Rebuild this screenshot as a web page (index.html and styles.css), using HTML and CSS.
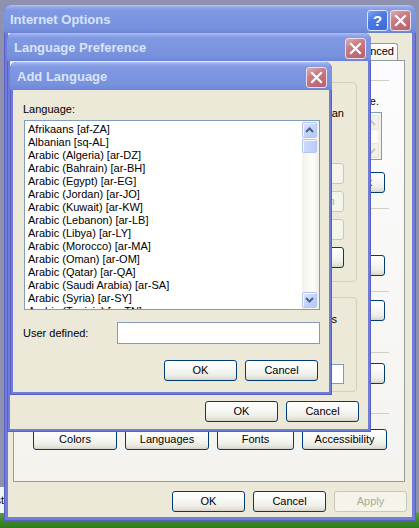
FILE: index.html
```html
<!DOCTYPE html>
<html>
<head>
<meta charset="utf-8">
<title>Add Language</title>
<link rel="stylesheet" href="styles.css">
</head>
<body>
<div class="stub">Test</div>

<div class="win win-io">
  <div class="title">
    <span class="title-text">Internet Options</span>
    <span class="tbtns">
      <span class="tb help">?</span>
      <span class="tb close"><svg width="19" height="19" viewBox="0 0 19 19"><path d="M5 5L14 14M14 5L5 14" stroke="#fff" stroke-width="2.2" stroke-linecap="square"/></svg></span>
    </span>
  </div>
  <div class="client io-client">
    <div class="tabs">
      <span class="tab sel">General</span>
      <span class="tab">Security</span>
      <span class="tab">Privacy</span>
      <span class="tab">Content</span>
      <span class="tab">Connections</span>
      <span class="tab">Programs</span>
      <span class="tab">Advanced</span>
    </div>
    <div class="page">
      <div class="ghead g1"><span>Home page</span><i></i></div>
      <div class="iotext">To create home page tabs, type each address on its own line.</div>
      <div class="hometb">
        <div class="sb sb-dis">
          <span class="sbtn"><svg width="9" height="6" viewBox="0 0 9 6"><path d="M1 5L4.5 1.5L8 5" stroke="#C9C7BA" stroke-width="2" fill="none"/></svg></span>
          <span class="track"></span>
          <span class="sbtn"><svg width="9" height="6" viewBox="0 0 9 6"><path d="M1 1L4.5 4.5L8 1" stroke="#C9C7BA" stroke-width="2" fill="none"/></svg></span>
        </div>
      </div>
      <div class="iorow r1"><span class="btn">Use current</span><span class="btn">Use default</span><span class="btn">Use blank</span></div>
      <div class="ghead g2"><span>Browsing history</span><i></i></div>
      <div class="iorow r2"><span class="btn">Delete...</span><span class="btn">Settings</span></div>
      <div class="ghead g3"><span>Search</span><i></i></div>
      <div class="iorow r3"><span class="btn">Settings</span></div>
      <div class="ghead g4"><span>Tabs</span><i></i></div>
      <div class="iorow r4"><span class="btn">Settings</span></div>
      <div class="ghead g5"><span>Appearance</span><i></i></div>
      <div class="approw">
        <span class="btn">Colors</span>
        <span class="btn">Languages</span>
        <span class="btn">Fonts</span>
        <span class="btn">Accessibility</span>
      </div>
    </div>
    <div class="foot io-foot">
      <span class="btn">OK</span>
      <span class="btn">Cancel</span>
      <span class="btn dis">Apply</span>
    </div>
  </div>
</div>

<div class="win win-lp">
  <div class="title">
    <span class="title-text">Language Preference</span>
    <span class="tbtns">
      <span class="tb close"><svg width="19" height="19" viewBox="0 0 19 19"><path d="M5 5L14 14M14 5L5 14" stroke="#fff" stroke-width="2.2" stroke-linecap="square"/></svg></span>
    </span>
  </div>
  <div class="client lp-client">
    <div class="grp lp-g1">
      <div class="rtext">Only add the ones you need, as some characters can</div>
      <div class="lp-row">
        <div class="lp-btns">
          <span class="btn dis">Move up</span>
          <span class="btn dis">Move down</span>
          <span class="btn dis">Remove</span>
          <span class="btn">Add...</span>
        </div>
      </div>
    </div>
    <div class="grp lp-g2">
      <div class="rtext r2t">should be added to typed web addresses</div>
      <div class="suffix"></div>
    </div>
    <div class="foot lp-foot">
      <span class="btn">OK</span>
      <span class="btn">Cancel</span>
    </div>
  </div>
</div>

<div class="win win-al">
  <div class="title">
    <span class="title-text">Add Language</span>
    <span class="tbtns">
      <span class="tb close"><svg width="19" height="19" viewBox="0 0 19 19"><path d="M5 5L14 14M14 5L5 14" stroke="#fff" stroke-width="2.2" stroke-linecap="square"/></svg></span>
    </span>
  </div>
  <div class="client al-client">
    <div class="al-label">Language:</div>
    <div class="listbox">
      <div class="items">
        <div>Afrikaans [af-ZA]</div>
        <div>Albanian [sq-AL]</div>
        <div>Arabic (Algeria) [ar-DZ]</div>
        <div>Arabic (Bahrain) [ar-BH]</div>
        <div>Arabic (Egypt) [ar-EG]</div>
        <div>Arabic (Jordan) [ar-JO]</div>
        <div>Arabic (Kuwait) [ar-KW]</div>
        <div>Arabic (Lebanon) [ar-LB]</div>
        <div>Arabic (Libya) [ar-LY]</div>
        <div>Arabic (Morocco) [ar-MA]</div>
        <div>Arabic (Oman) [ar-OM]</div>
        <div>Arabic (Qatar) [ar-QA]</div>
        <div>Arabic (Saudi Arabia) [ar-SA]</div>
        <div>Arabic (Syria) [ar-SY]</div>
        <div>Arabic (Tunisia) [ar-TN]</div>
      </div>
      <div class="sb">
        <span class="sbtn"><svg width="9" height="6" viewBox="0 0 9 6"><path d="M1 5L4.5 1.5L8 5" stroke="#4D6185" stroke-width="2" fill="none"/></svg></span>
        <span class="thumb"></span>
        <span class="track"></span>
        <span class="sbtn"><svg width="9" height="6" viewBox="0 0 9 6"><path d="M1 1L4.5 4.5L8 1" stroke="#4D6185" stroke-width="2" fill="none"/></svg></span>
      </div>
    </div>
    <div class="ud-row">
      <span class="ud-label">User defined:</span>
      <span class="ud-box"></span>
    </div>
    <div class="foot al-foot">
      <span class="btn">OK</span>
      <span class="btn">Cancel</span>
    </div>
  </div>
</div>
</body>
</html>
```

FILE: styles.css
```css
* { box-sizing: border-box; }
html, body { margin: 0; padding: 0; }
body {
  width: 419px;
  height: 528px;
  overflow: hidden;
  position: relative;
  font-family: "Liberation Sans", Arial, sans-serif;
  font-size: 11px;
  line-height: 13px;
  color: #000;
  background: linear-gradient(180deg, #8F92AE 0px, #8F92AE 512px, #56A03A 513px, #3F8B29 520px, #2E7A1F 528px);
}

.stub {
  position: absolute;
  left: -40px;
  top: 487px;
  width: 44px;
  height: 26px;
  background: #F4F4F2;
  text-align: right;
  line-height: 26px;
  padding-right: 0;
  overflow: hidden;
}

/* windows */
.win {
  position: absolute;
  display: flex;
  flex-direction: column;
  background: #6F7DD8;
  border-radius: 7px 7px 0 0;
  box-shadow: inset 0 0 0 1px #5A5FC6;
}
.win-io { left: 4px; top: 5px; width: 412px; height: 516px; }
.win-lp { left: 7px; top: 33px; width: 364px; height: 399px; }
.win-al { left: 10px; top: 62px; width: 322px; height: 333px; }

.title {
  flex: none;
  height: 28px;
  display: flex;
  align-items: center;
  padding: 2px 5px 0 7px;
  border-radius: 7px 7px 0 0;
  background: linear-gradient(180deg, #B2C2F3 0px, #95AAEA 2px, #8099E2 5px, #7C95E0 14px, #7891DD 23px, #6F88D8 27px, #6980D2 28px);
}
.win-io .title { padding-left: 6px; }
.title-text {
  flex: 1;
  font-weight: bold;
  font-size: 13px;
  line-height: 16px;
  color: #D8E4F8;
  white-space: nowrap;
}
.tbtns { display: flex; gap: 2px; }
.tb {
  width: 21px;
  height: 21px;
  border: 1px solid #EEDDE4;
  border-radius: 3px;
  display: flex;
  align-items: center;
  justify-content: center;
}
.close {
  background: linear-gradient(150deg, #E0AEB0 0%, #C97E86 35%, #BC6A74 75%, #B46270 100%);
}
.help {
  border-color: #DCE6FB;
  background: linear-gradient(150deg, #7FA3F4 0%, #4B79E4 40%, #3A68DA 100%);
  color: #fff;
  font-weight: bold;
  font-size: 15px;
  line-height: 19px;
}

.client {
  flex: 1;
  background: #ECE9D8;
  margin: 0 3px 3px;
  display: flex;
  flex-direction: column;
}
.io-client { margin: 0 4px 4px; }

/* buttons */
.btn {
  flex: none;
  width: 73px;
  height: 21px;
  border: 1px solid #003C74;
  border-radius: 3px;
  background: linear-gradient(180deg, #FFFFFF 0%, #FAFAF8 30%, #F0F0EA 70%, #E3E1D8 90%, #D6D0C5 100%);
  display: flex;
  align-items: center;
  justify-content: center;
  white-space: nowrap;
}
.btn.dis {
  border-color: #C9C7BA;
  background: #F5F4EA;
  color: #ACA899;
}
.foot { display: flex; justify-content: flex-end; gap: 8px; }

/* Internet Options */
.tabs {
  flex: none;
  height: 27px;
  display: flex;
  justify-content: flex-end;
  align-items: flex-end;
  padding-right: 14px;
}
.tab {
  height: 17px;
  padding: 0 3px;
  border: 1px solid #919B9C;
  border-bottom: none;
  border-radius: 3px 3px 0 0;
  background: linear-gradient(180deg, #FFFFFF, #F3F3EF);
  line-height: 15px;
  white-space: nowrap;
}
.tab.sel { height: 20px; }
.page {
  flex: none;
  height: 422px;
  margin: 0 7px 0 5px;
  border: 1px solid #919B9C;
  background: linear-gradient(180deg, #FCFCFE, #F4F3EE);
  padding: 0 15px 0 10px;
  display: flex;
  flex-direction: column;
}
.ghead {
  height: 13px;
  display: flex;
  align-items: center;
  gap: 4px;
  white-space: nowrap;
}
.ghead i { flex: 1; height: 1px; background: #D0D0BF; }
.g1 { margin-top: 13px; }
.g2 { margin-top: 9px; }
.g3 { margin-top: 9px; }
.g4 { margin-top: 25px; }
.g5 { margin-top: 23px; }
.iotext {
  margin-top: 8px;
  height: 13px;
  text-align: right;
  padding-right: 10px;
  white-space: nowrap;
}
.hometb {
  margin-top: 4px;
  height: 48px;
  margin-right: 7px;
  border: 1px solid #7F9DB9;
  background: #fff;
  display: flex;
  justify-content: flex-end;
}
.iorow { display: flex; justify-content: flex-end; gap: 6px; margin-right: 4px; }
.iorow .btn { width: 75px; }
.r1 { margin-top: 12px; }
.r2 { margin-top: 40px; }
.r3 { margin-top: 2px; }
.r4 { margin-top: 4px; }
.approw {
  margin-top: 9px;
  margin-left: 9px;
  display: grid;
  grid-template-columns: 84px 84px 77px 85px;
  column-gap: 8px;
}
.approw .btn { width: auto; }
.io-foot { padding: 9px 5px 0 0; }

/* scrollbars */
.sb {
  flex: none;
  width: 17px;
  display: flex;
  flex-direction: column;
  padding: 1px 2px 1px 0;
  background: linear-gradient(90deg, #F3F1EA 0%, #FEFEFB 65%, #EEEDE6 100%);
}
.sbtn {
  flex: none;
  height: 16px;
  border: 1px solid #B3C6F2;
  border-radius: 2px;
  background: linear-gradient(135deg, #DDE7FE 0%, #C3D3FC 50%, #B5C9F8 100%);
  box-shadow: inset 1px 1px 0 #F4F7FF;
  display: flex;
  align-items: center;
  justify-content: center;
}
.thumb {
  flex: none;
  height: 14px;
  margin-top: 1px;
  border: 1px solid #B3C6F2;
  border-radius: 2px;
  background: linear-gradient(90deg, #CCDAFD 0%, #C2D3FC 60%, #B8CBF8 100%);
  box-shadow: inset 1px 1px 0 #F4F7FF;
}
.track { flex: 1; }
.sb-dis { padding-top: 2px; }
.sb-dis .sbtn {
  height: 15px;
  border-color: #E8E6DC;
  background: #F1F0E9;
  box-shadow: none;
}

/* Language Preference */
.lp-client { padding: 21px 9px 7px 7px; }
.grp { border: 1px solid #D0D0BF; border-radius: 4px; flex: none; }
.lp-g1 {
  height: 200px;
  margin-right: 2px;
  padding: 24px 12px 0 10px;
  display: flex;
  flex-direction: column;
}
.rtext { height: 13px; text-align: right; white-space: nowrap; }
.lp-row { display: flex; justify-content: flex-end; margin-top: 43px; }
.lp-btns { display: flex; flex-direction: column; gap: 7px; }
.lp-btns .btn { width: 75px; }
.lp-g2 {
  margin-top: 15px;
  height: 95px;
  margin-right: 2px;
  padding: 15px 12px 0 10px;
  display: flex;
  flex-direction: column;
}
.r2t { padding-right: 7px; }
.suffix {
  margin-top: 38px;
  align-self: flex-end;
  width: 60px;
  height: 20px;
  border: 1px solid #7F9DB9;
  background: #fff;
}
.lp-foot { margin-top: 9px; }

/* Add Language */
.al-client { padding: 13px 9px 11px 10px; }
.al-label { height: 13px; }
.listbox {
  flex: none;
  margin: 4px 0 0 1px;
  height: 190px;
  border: 1px solid #7F9DB9;
  background: #fff;
  display: flex;
}
.items {
  flex: 1;
  padding: 2px 0 0 3px;
  overflow: hidden;
  white-space: nowrap;
}
.items div { height: 13px; }
.ud-row {
  flex: none;
  display: flex;
  align-items: center;
  margin-top: 12px;
  height: 22px;
}
.ud-label { flex: 1; }
.ud-box {
  width: 203px;
  height: 22px;
  border: 1px solid #7F9DB9;
  background: #fff;
}
.al-foot { margin-top: 16px; padding-right: 2px; }
```
